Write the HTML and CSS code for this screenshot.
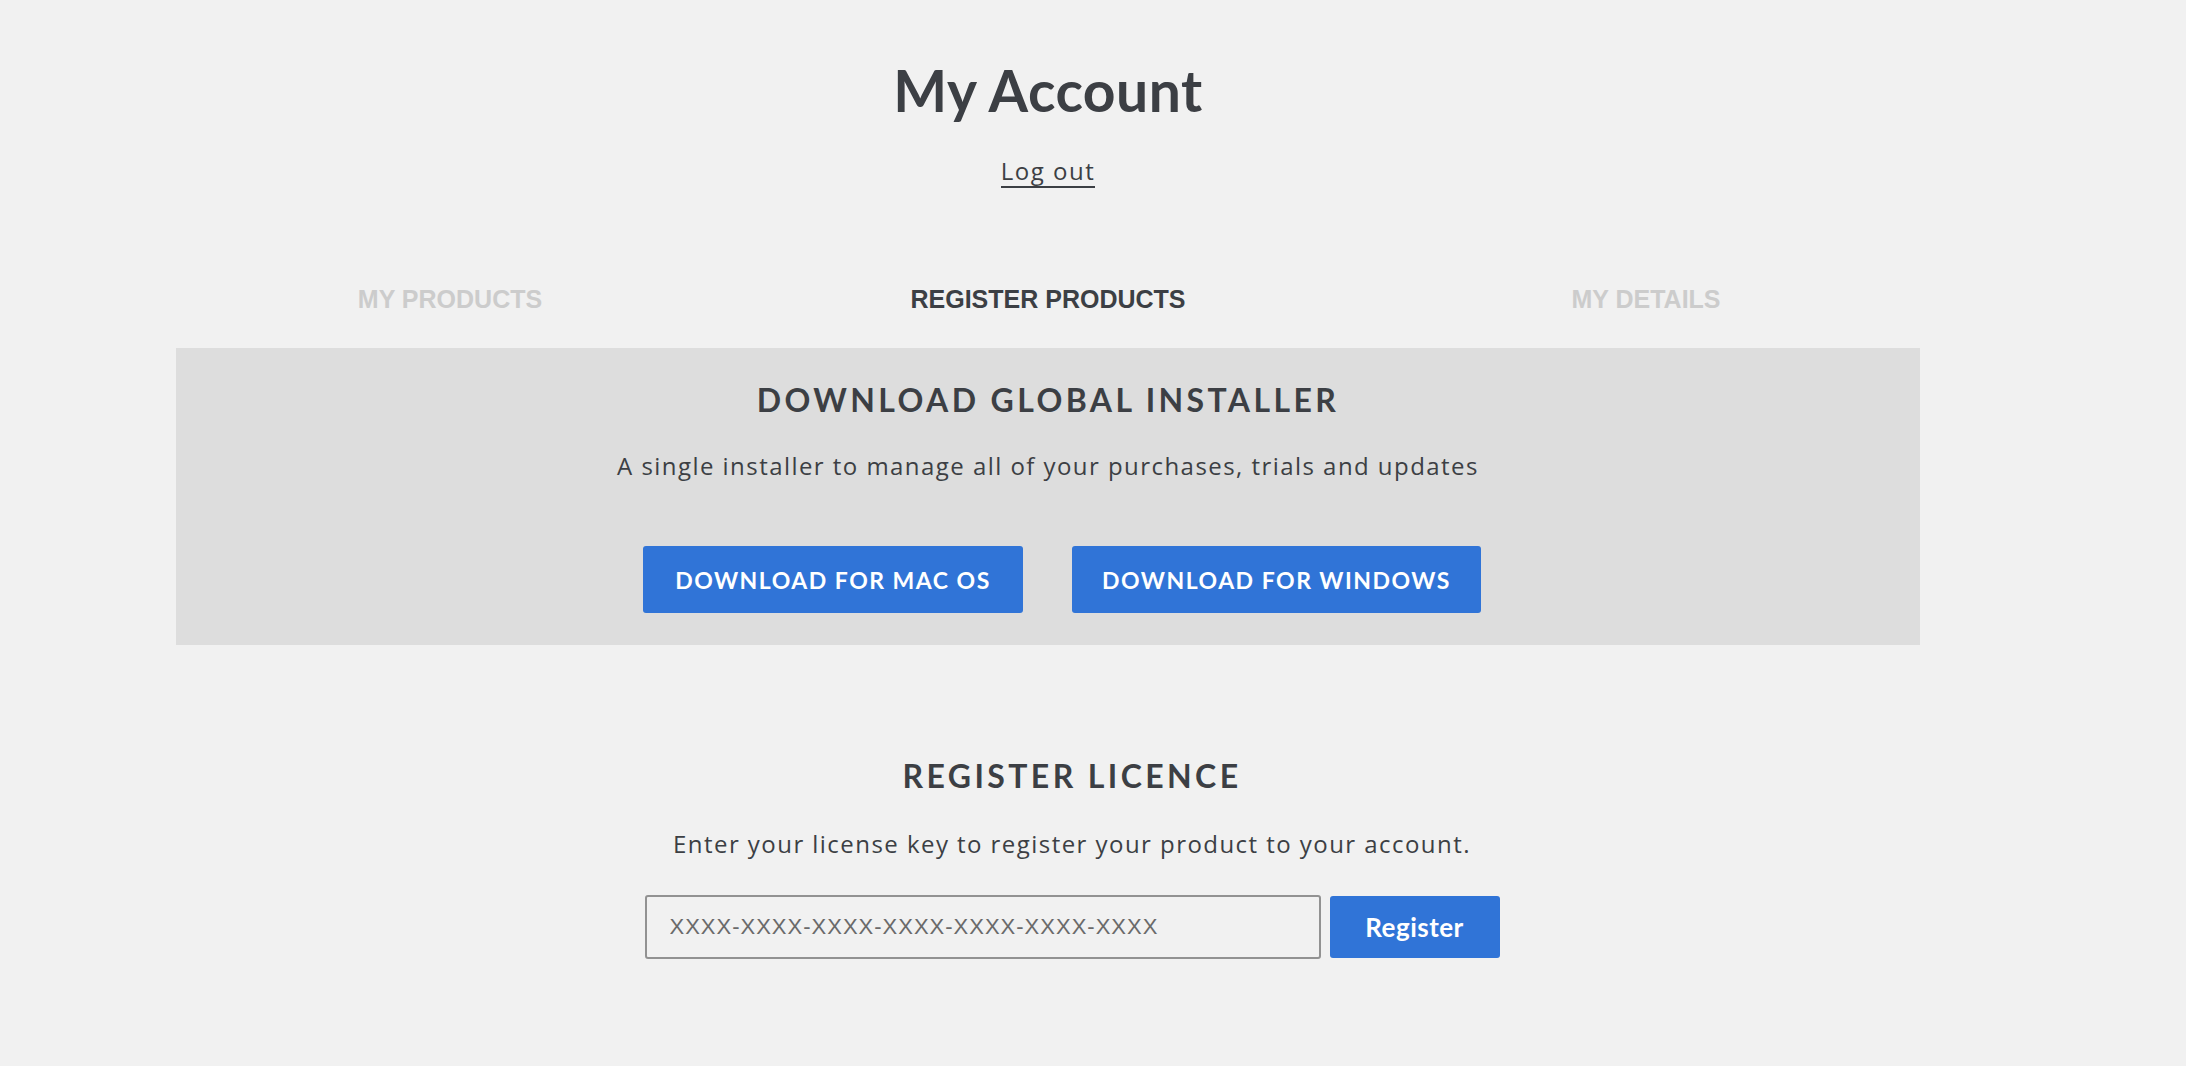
FILE: index.html
```html
<!DOCTYPE html>
<html lang="en">
<head>
    <meta charset="UTF-8">
    <meta name="viewport" content="width=device-width, initial-scale=1.0">
    <title>My Account</title>
    <link rel="stylesheet" href="styles.css">
</head>
<body>
    <div class="page">
        <h1 class="page-title">My Account</h1>
        <a href="#" class="logout">Log out</a>

        <nav class="tabs">
            <a href="#" class="tab">MY PRODUCTS</a>
            <a href="#" class="tab active">REGISTER PRODUCTS</a>
            <a href="#" class="tab">MY DETAILS</a>
        </nav>

        <!-- Installer -->
        <section class="installer">
            <h2 class="section-title">DOWNLOAD GLOBAL INSTALLER</h2>
            <p class="section-text">A single installer to manage all of your purchases, trials and updates</p>
            <div class="installer-buttons">
                <a href="#" class="btn btn-download btn-mac">DOWNLOAD FOR MAC OS</a>
                <a href="#" class="btn btn-download btn-windows">DOWNLOAD FOR WINDOWS</a>
            </div>
        </section>

        <!-- Register licence -->
        <section class="register">
            <h2 class="section-title">REGISTER LICENCE</h2>
            <p class="section-text">Enter your license key to register your product to your account.</p>
            <form class="register-form" onsubmit="return false;">
                <input type="text" class="licence-input" placeholder="XXXX-XXXX-XXXX-XXXX-XXXX-XXXX-XXXX">
                <button type="submit" class="btn btn-register">Register</button>
            </form>
        </section>
    </div>
</body>
</html>
```

FILE: styles.css
```css
body {
    margin: 0;
    padding: 0;
    background-color: #f1f1f1;
    color: #3c3f44;
    font-family: "Open Sans", Arial, sans-serif;
}
.page {
    width: 1744px;
    margin-left: 176px;
    display: flex;
    flex-direction: column;
    align-items: center;
    text-align: center;
}
.page-title {
    margin: 52px 0 0;
    font-family: Lato, "Open Sans", sans-serif;
    font-weight: 700;
    font-size: 57px;
    line-height: 76px;
    letter-spacing: 0.5px;
}
.logout {
    margin-top: 28px;
    color: #3c3f44;
    font-size: 24px;
    line-height: 30px;
    letter-spacing: 1.5px;
    text-decoration: none;
    border-bottom: 2px solid #3c3f44;
}
.tabs {
    display: grid;
    grid-template-columns: repeat(3, 598px);
    margin-top: 96px;
}
.tab {
    font-family: "Liberation Sans", Arial, sans-serif;
    font-weight: 700;
    font-size: 25px;
    line-height: 30px;
    color: #cccccc;
    text-decoration: none;
}
.tab.active {
    color: #3c3f44;
}
.installer {
    align-self: stretch;
    margin-top: 34px;
    height: 297px;
    background-color: #dddddd;
    padding-top: 32px;
    box-sizing: border-box;
}
.section-title {
    margin: 0;
    font-family: Lato, "Open Sans", sans-serif;
    font-weight: 700;
    font-size: 32px;
    line-height: 40px;
    letter-spacing: 3.4px;
}
.section-text {
    margin: 31px 0 0;
    font-size: 24px;
    line-height: 30px;
    letter-spacing: 1.45px;
}
.installer-buttons {
    display: flex;
    justify-content: center;
    gap: 49px;
    margin-top: 65px;
    margin-left: 28px;
}
.btn {
    display: flex;
    align-items: center;
    justify-content: center;
    background-color: #3074d7;
    color: #fff;
    border: none;
    border-radius: 3px;
    font-family: Lato, "Open Sans", sans-serif;
    text-decoration: none;
    cursor: pointer;
}
.btn-download {
    height: 67px;
    font-weight: 700;
    font-size: 23px;
    letter-spacing: 1.5px;
}
.btn-mac {
    width: 380px;
}
.btn-windows {
    width: 409px;
}
.register {
    margin-top: 111px;
    margin-left: 48px;
}
.register .section-text {
    margin-top: 33px;
}
.register-form {
    display: flex;
    align-items: center;
    gap: 9px;
    margin-top: 36px;
}
.licence-input {
    width: 676px;
    height: 64px;
    box-sizing: border-box;
    padding: 0 23px;
    border: 2px solid #929292;
    border-radius: 3px;
    background-color: #f1f1f1;
    font-family: "Liberation Sans", Arial, sans-serif;
    font-size: 22px;
    letter-spacing: 1px;
    color: #3c3f44;
}
.licence-input::placeholder {
    color: #6a6a6a;
}
.btn-register {
    width: 170px;
    height: 62px;
    font-weight: 700;
    font-size: 26px;
    letter-spacing: 0.5px;
}
```
